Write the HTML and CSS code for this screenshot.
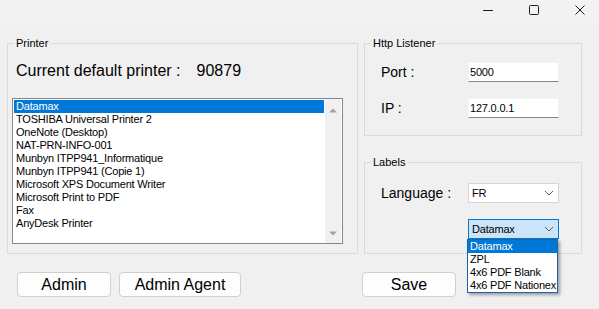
FILE: index.html
```html
<!DOCTYPE html>
<html lang="fr">
<head>
    <meta charset="UTF-8">
    <meta name="viewport" content="width=device-width, initial-scale=1.0">
    <title>Printer Agent</title>
    <link rel="stylesheet" href="styles.css">
</head>
<body>
    <div class="titlebar">
        <span class="win-btn">
            <svg width="12" height="12" viewBox="0 0 12 12"><path d="M1 6.5h10" stroke="#1b1b1b" stroke-width="1"/></svg>
        </span>
        <span class="win-btn">
            <svg width="12" height="12" viewBox="0 0 12 12"><rect x="1.5" y="1.5" width="9" height="9" rx="1" fill="none" stroke="#1b1b1b" stroke-width="1"/></svg>
        </span>
        <span class="win-btn">
            <svg width="12" height="12" viewBox="0 0 12 12"><path d="M1.5 1.5l9 9M10.5 1.5l-9 9" stroke="#1b1b1b" stroke-width="1"/></svg>
        </span>
    </div>

    <div class="window">
        <div class="col-left">
            <fieldset class="group group-printer">
                <legend>Printer</legend>
                <div class="current">
                    <span>Current default printer :</span>
                    <span>90879</span>
                </div>
                <div class="listbox">
                    <ul class="items">
                        <li class="selected">Datamax</li>
                        <li>TOSHIBA Universal Printer 2</li>
                        <li>OneNote (Desktop)</li>
                        <li>NAT-PRN-INFO-001</li>
                        <li>Munbyn ITPP941_Informatique</li>
                        <li>Munbyn ITPP941 (Copie 1)</li>
                        <li>Microsoft XPS Document Writer</li>
                        <li>Microsoft Print to PDF</li>
                        <li>Fax</li>
                        <li>AnyDesk Printer</li>
                    </ul>
                    <div class="vscroll">
                        <svg width="16" height="16" viewBox="0 0 16 16"><path d="M4 10.5L8 6.5L12 10.5Z" fill="#a3a3a3"/></svg>
                        <svg width="16" height="16" viewBox="0 0 16 16"><path d="M4 5.5L8 9.5L12 5.5Z" fill="#a3a3a3"/></svg>
                    </div>
                </div>
            </fieldset>
            <div class="buttons">
                <button class="btn btn-admin">Admin</button>
                <button class="btn btn-agent">Admin Agent</button>
            </div>
        </div>

        <div class="col-right">
            <fieldset class="group group-http">
                <legend>Http Listener</legend>
                <div class="field first">
                    <label for="port">Port :</label>
                    <input class="textbox" id="port" type="text" value="5000">
                </div>
                <div class="field">
                    <label for="ip">IP :</label>
                    <input class="textbox" id="ip" type="text" value="127.0.0.1">
                </div>
            </fieldset>

            <fieldset class="group group-labels">
                <legend>Labels</legend>
                <div class="field first">
                    <label>Language :</label>
                    <div class="combo">
                        <span>FR</span>
                        <svg width="10" height="6" viewBox="0 0 10 6"><path d="M1 1l4 4 4-4" fill="none" stroke="#5f5f5f" stroke-width="1"/></svg>
                    </div>
                </div>
                <div class="field">
                    <span></span>
                    <div class="combo combo-open">
                        <span>Datamax</span>
                        <svg width="10" height="6" viewBox="0 0 10 6"><path d="M1 1l4 4 4-4" fill="none" stroke="#5f5f5f" stroke-width="1"/></svg>
                        <ul class="dropdown">
                            <li class="selected">Datamax</li>
                            <li>ZPL</li>
                            <li>4x6 PDF Blank</li>
                            <li>4x6 PDF Nationex</li>
                        </ul>
                    </div>
                </div>
            </fieldset>

            <div class="buttons">
                <button class="btn btn-save">Save</button>
            </div>
        </div>
    </div>
</body>
</html>
```

FILE: styles.css
```css
body {
    margin: 0;
    padding: 0;
    width: 599px;
    height: 309px;
    overflow: hidden;
    background-color: #f0f0f0;
    font-family: "Liberation Sans", Arial, sans-serif;
    color: #000;
}

.titlebar {
    height: 25px;
    background-color: #f3f2f3;
    display: flex;
    justify-content: flex-end;
}

.win-btn {
    width: 38px;
    height: 20px;
    padding-left: 8px;
    display: flex;
    align-items: center;
    justify-content: center;
}

.window {
    display: flex;
    padding-top: 12px;
}

.col-left {
    padding-left: 7px;
    width: 351px;
}

.col-right {
    margin-left: 4px;
    width: 220px;
}

/* group boxes */
.group {
    margin: 0;
    padding: 0;
    min-width: 0;
    border: 1px solid #dadada;
    box-sizing: border-box;
}

.group legend {
    font-size: 11px;
    line-height: 12px;
    margin-left: 6px;
    padding: 0 2px;
}

.group-printer {
    width: 351px;
    padding-bottom: 9px;
}

.group-http,
.group-labels {
    width: 218px;
    margin-left: 2px;
}

.group-http {
    padding-bottom: 17px;
}

.group-labels {
    margin-top: 20px;
    padding-bottom: 14px;
}

/* printer */
.current {
    display: flex;
    gap: 16px;
    margin: 13px 0 0 8px;
    font-size: 16px;
    line-height: 18px;
}

.listbox {
    display: flex;
    margin: 18px 0 0 4px;
    width: 331px;
    height: 146px;
    box-sizing: border-box;
    border: 1px solid #828790;
    background-color: #fff;
}

.items {
    list-style: none;
    margin: 0;
    padding: 1px;
    flex: 1;
}

.items li,
.dropdown li {
    font-size: 11px;
    line-height: 13px;
    height: 13px;
    letter-spacing: -0.2px;
    padding-left: 2px;
    white-space: nowrap;
}

.items li.selected,
.dropdown li.selected {
    background-color: #0078d7;
    color: #fff;
}

.vscroll {
    width: 16px;
    margin-right: 1px;
    background-color: #f0f0f0;
    display: flex;
    flex-direction: column;
    justify-content: space-between;
    padding: 3px 0 1px;
}

/* fields */
.field {
    display: grid;
    grid-template-columns: 87px 91px;
    align-items: center;
    margin: 16px 0 0 16px;
    height: 20px;
}

.field.first {
    margin-top: 13px;
}

.group-labels .field.first {
    margin-top: 15px;
}

.field label {
    font-size: 14px;
    line-height: 20px;
}

.textbox {
    box-sizing: border-box;
    width: 91px;
    height: 20px;
    margin: 0;
    padding: 0 1px;
    border: 1px solid #f2f2f2;
    border-bottom-color: #868686;
    background-color: #fff;
    font-family: "Liberation Sans", Arial, sans-serif;
    font-size: 11px;
    letter-spacing: -0.2px;
    color: #000;
    outline: none;
}

.combo {
    position: relative;
    box-sizing: border-box;
    width: 91px;
    height: 20px;
    display: flex;
    align-items: center;
    justify-content: space-between;
    padding: 0 4px 0 3px;
    border: 1px solid #d5d5d5;
    background-color: #fff;
    font-size: 11px;
    letter-spacing: -0.2px;
}

.combo-open {
    background-color: #cce4f7;
    border-color: #0078d7;
}

.dropdown {
    position: absolute;
    top: 19px;
    left: -2px;
    width: 91px;
    box-sizing: border-box;
    list-style: none;
    margin: 0;
    padding: 0;
    border: 1px solid #1c62a8;
    background-color: #fff;
    box-shadow: 2px 2px 3px rgba(0, 0, 0, 0.35);
    color: #000;
    z-index: 2;
}

/* buttons */
.buttons {
    display: flex;
    gap: 8px;
    margin-top: 18px;
    padding-left: 10px;
}

.col-right .buttons {
    padding-left: 0;
}

.btn {
    height: 25px;
    padding: 0;
    background-color: #fdfdfd;
    border: 1px solid #d0d0d0;
    border-radius: 4px;
    font-family: "Liberation Sans", Arial, sans-serif;
    font-size: 16px;
    color: #000;
}

.btn-admin,
.btn-save {
    width: 94px;
}

.btn-agent {
    width: 122px;
}
```
